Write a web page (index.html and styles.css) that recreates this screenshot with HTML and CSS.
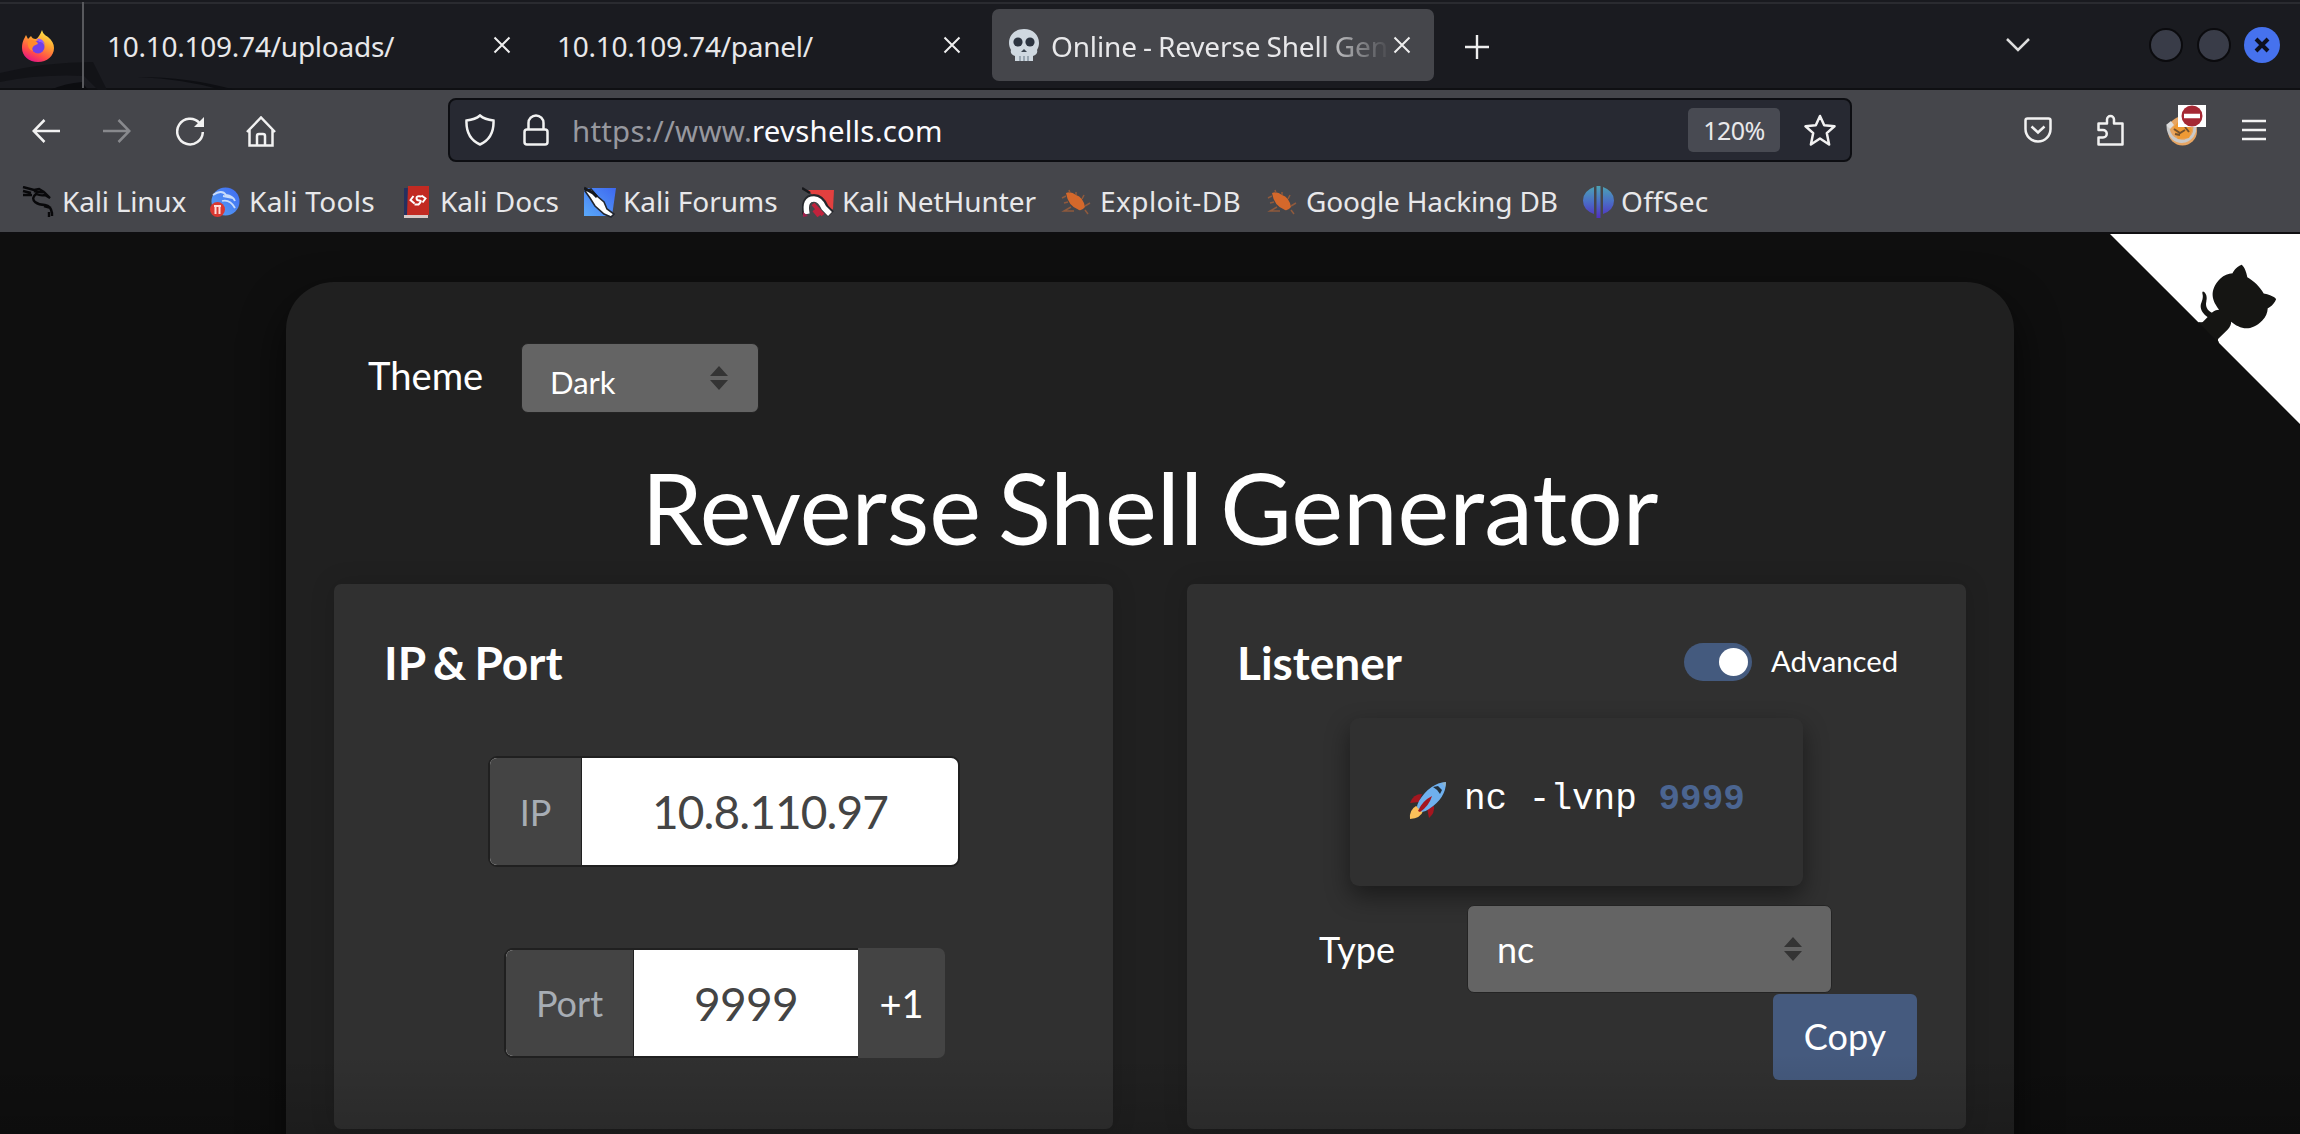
FILE: index.html
```html
<!DOCTYPE html>
<html lang="en">
<head>
<meta charset="utf-8">
<title>Online - Reverse Shell Generator</title>
<link rel="stylesheet" href="styles.css">
</head>
<body>
<div class="window">
  <header class="tabstrip">
    <svg class="wallpaper" width="260" height="90" viewBox="0 0 260 90"><path d="M0 73Q45 62 93 62L107 90H98L84 76Q40 74 0 82Z" fill="#121317"/><path d="M50 90Q66 83 82 82L88 90Z" fill="#0c0d10"/><path d="M137 77Q190 77 235 90H222Q185 79 137 77Z" fill="#0e0f13"/></svg>
    <div class="firefox">
      <svg width="32" height="32" viewBox="0 0 32 32"><defs><linearGradient id="fx" x1=".8" y1="0" x2=".3" y2="1"><stop offset="0" stop-color="#fff44f"/><stop offset=".4" stop-color="#ffa030"/><stop offset=".75" stop-color="#ff4a4a"/><stop offset="1" stop-color="#e31587"/></linearGradient></defs><path d="M20 0c1 4 3 5 6 7 4 3 6 7 6 11 0 8-7 14-16 14S0 26 0 18C0 12 2 9 4 5l2 4 3-3c1 2 2 3 5 3 2-1 4-4 6-9z" fill="url(#fx)"/><circle cx="16" cy="17" r="6.500" fill="#7040e8"/><path d="M6 11c3-2 7-1 9 1l1 2c-2 1-4 1-5 3-1 1-1 3 0 4-4-1-6-5-5-10z" fill="#ff8a2a"/><path d="M15 9c4-1 7 2 8 6-2-3-4-3-6-3z" fill="#9059ff"/></svg>
    </div>
    <div class="tab"><span class="label">10.10.109.74/uploads/</span><svg class="close" width="18" height="18" viewBox="0 0 18 18"><path d="M1.500 1.500l15 15m0-15l-15 15"/></svg></div>
    <div class="tab"><span class="label">10.10.109.74/panel/</span><svg class="close" width="18" height="18" viewBox="0 0 18 18"><path d="M1.500 1.500l15 15m0-15l-15 15"/></svg></div>
    <div class="tab active">
      <svg width="30" height="32" viewBox="0 0 30 32"><path d="M15 0C6 0 0 6 0 14c0 3 1 5 2 7-1 3 1 5 4 6v5h18v-5c3-1 5-3 4-6 1-2 2-4 2-7C30 6 24 0 15 0z" fill="#cfd8e0"/><circle cx="9" cy="13" r="4.600" fill="#2c3440"/><circle cx="21" cy="13" r="4.600" fill="#2c3440"/><path d="M12 23l3-3 3 3z" fill="#3b444f"/><path d="M11 27v5m4-5v5m4-5v5" stroke="#8996a3" stroke-width="1.500"/></svg>
      <span class="label fade">Online - Reverse Shell Gen</span><svg class="close" width="18" height="18" viewBox="0 0 18 18"><path d="M1.500 1.500l15 15m0-15l-15 15"/></svg></div>
    <svg class="plus" width="24" height="24" viewBox="0 0 24 24"><path d="M12 0v24M0 12h24"/></svg>
    <div class="controls">
      <svg class="chev" width="26" height="16" viewBox="0 0 26 16"><path d="M2 2l11 11L24 2"/></svg>
      <i class="dot"></i><i class="dot"></i>
      <i class="dot quit"><svg width="16" height="16" viewBox="0 0 16 16"><path d="M2 2l12 12m0-12L2 14" stroke="#0d1020" stroke-width="4"/></svg></i>
    </div>
  </header>

  <nav class="toolbar">
    <div class="navset">
      <svg class="ic" width="28" height="24" viewBox="0 0 28 24"><path d="M28 12H2M12.500 1L1.700 12l10.800 11"/></svg>
      <svg class="ic off" width="28" height="24" viewBox="0 0 28 24"><path d="M0 12h26M15.500 1l10.800 11-10.800 11"/></svg>
      <svg class="ic reload" width="28" height="30" viewBox="0 0 28 30"><path d="M23.500 7A12.800 12.800 0 1 0 26.800 16"/><path d="M28 1v10H18z" fill="#f2f2f2" stroke="none"/></svg>
      <svg class="ic" width="30" height="31" viewBox="0 0 30 31"><path d="M1 16L15 1.500 29 16M3.500 14v15.500h23V14M11 29.500V20q0-2 2-2h4q2 0 2 2v9.500"/></svg>
    </div>
    <div class="urlbar">
      <svg class="ic" width="30" height="32" viewBox="0 0 30 32"><path d="M15 1.500C11 5 6 6 1.500 6.500 1 18 5 26 15 30.500 25 26 29 18 28.500 6.500 24 6 19 5 15 1.500z"/></svg>
      <svg class="ic lock" width="26" height="32" viewBox="0 0 26 32"><rect x="1.500" y="15.500" width="23" height="15" rx="2.500"/><path d="M5.500 15V9a7.500 7.500 0 0 1 15 0v6"/></svg>
      <span class="url">https://www.<b>revshells.com</b></span>
      <span class="zoom">120%</span>
      <svg class="ic star" width="32" height="32" viewBox="0 0 32 32"><path d="M16 2l4.200 9.300 10.300 1-7.700 6.800 2.300 11.400L16 24.500l-9.100 6 2.300-11.400L1.500 12.300l10.300-1z" stroke-linejoin="round"/></svg>
    </div>
    <div class="tools">
      <svg class="ic" width="28" height="26" viewBox="0 0 28 26"><path d="M3.500 1.500h21q2 0 2 2V12a12.500 12.500 0 0 1-25 0V3.500q0-2 2-2z"/><path d="M7.500 9.500l6.500 6 6.500-6"/></svg>
      <svg class="ic puzzle" width="27" height="32" viewBox="0 0 27 32"><path d="M1.500 16V9.500H10V5.500a3.500 3.500 0 0 1 7 0v4h8.500v21h-24v-7H6a3.700 3.700 0 0 0 0-7.500z" stroke-linejoin="round"/></svg>
      <span class="cookie">
        <svg width="32" height="32" viewBox="0 0 32 32"><circle cx="16.500" cy="17" r="14.500" fill="#e6a563"/><path d="M2 12c0 10 8 17 17 15 7-2 10-8 10-14" fill="none" stroke="#c9c9c9" stroke-width="3"/><path d="M7 14l5-6h10l4 8-3 8-11 1z" fill="#ef9a35"/><path d="M8 15l6 4 5-3m-10 4l5 1m5-8l4 5" stroke="#74522f" stroke-width="2" fill="none"/><path d="M0 11l5-4 3 4-4 4z" fill="#ddd"/></svg>
        <i class="stop"><svg width="22" height="22" viewBox="0 0 22 22"><circle cx="11" cy="11" r="10.500" fill="#a52834"/><path d="M3 11h16" stroke="#fff" stroke-width="4.500"/></svg></i>
      </span>
      <svg class="ic menu" width="24" height="22" viewBox="0 0 24 22"><path d="M0 2h24M0 11h24M0 20h24"/></svg>
    </div>
  </nav>

  <nav class="bookmarks">
    <a class="bm b1"><svg width="32" height="32" viewBox="0 0 32 32"><path d="M1 1l11 3 5-1 5 3M1 5l8 2m-8 2l9 0M12 5q6 2 10 1l6 6-5-3q-4 1-9-1-5 4-1 8 4 3 10 3 6 1 7 8l0 3M22 20l7 2m-2 4v5" fill="none" stroke="#08080a" stroke-width="2.400"/></svg>Kali Linux</a>
    <a class="bm b2"><svg width="30" height="32" viewBox="0 0 30 32"><defs><linearGradient id="kt" x1="0" y1="1" x2="1" y2="0"><stop offset="0" stop-color="#58a6f5"/><stop offset="1" stop-color="#3f69f2"/></linearGradient></defs><circle cx="15.500" cy="15.500" r="14" fill="url(#kt)"/><path d="M3 9q9-6 13 0 7 1 9 6M12 15q8-2 13 7M13 10l10 2" fill="none" stroke="#c8dcfb" stroke-width="1.800"/><circle cx="7.500" cy="23.500" r="7.500" fill="#d93831"/><path d="M4 20h7M5.500 20v8M9.500 20v8" stroke="#ffdcd8" stroke-width="2"/></svg>Kali Tools</a>
    <a class="bm b3"><svg width="25" height="32" viewBox="0 0 25 32"><path d="M0 2h4v30H0z" fill="#24305f"/><path d="M4 0h21v29H3z" fill="#c22a22"/><path d="M0 29h24v3H0z" fill="#d8c9c6"/><path d="M9.500 10l-3 4 4 3.500m7-8l4 3-3 4M17.500 10.500q-5-1-5 1.500t3 2.500-1 4h-4" fill="none" stroke="#fff" stroke-width="2"/></svg>Kali Docs</a>
    <a class="bm b4"><svg width="32" height="32" viewBox="0 0 32 32"><defs><linearGradient id="kf" x1="0" y1="1" x2="1" y2="0"><stop offset="0" stop-color="#5aa9fa"/><stop offset="1" stop-color="#3e68f0"/></linearGradient></defs><path d="M0 2h32l-4 28H0z" fill="url(#kf)"/><path d="M1 5l6-2 6 7 7 6 3 7 7 5-3 3-7-3-9-8-5-8z" fill="#fff" stroke="#22262f" stroke-width="1.600"/><path d="M0 2l9 5 4 4" fill="none" stroke="#15171b" stroke-width="3"/></svg>Kali Forums</a>
    <a class="bm b5"><svg width="32" height="32" viewBox="0 0 32 32"><path d="M6 4h26l-1 19-5 4z" fill="#e2403f"/><path d="M4 28q-2-16 8-16 7 0 11 10l6 6" fill="none" stroke="#25272c" stroke-width="8"/><path d="M5 28q-3-15 7-15 6 0 10 9l6 6" fill="none" stroke="#fff" stroke-width="5.500"/><path d="M11 18l10 11m-9-5l5 6" stroke="#c0223c" stroke-width="4"/><path d="M0 2l8 5" stroke="#17181b" stroke-width="2.500"/><path d="M1 26l5 4-5 1z" fill="#9c1f4a"/></svg>Kali NetHunter</a>
    <a class="bm b6"><svg class="bug" width="30" height="26" viewBox="0 0 30 26"><path d="M5 4q5-2 10 2 7 2 9 12-3 4-6 3Q7 17 5 4z" fill="#d4682b"/><path d="M9 4L8 1m7 5V3m6 7l2-4m1 11l5-3m-5 7l3 4M5 7l-4 2m6 4l-4 1m7 4l-7 4 10 0" stroke="#8f5a3d" stroke-width="1.500" fill="none"/></svg>Exploit-DB</a>
    <a class="bm b7"><svg class="bug" width="30" height="26" viewBox="0 0 30 26"><path d="M5 4q5-2 10 2 7 2 9 12-3 4-6 3Q7 17 5 4z" fill="#d4682b"/><path d="M9 4L8 1m7 5V3m6 7l2-4m1 11l5-3m-5 7l3 4M5 7l-4 2m6 4l-4 1m7 4l-7 4 10 0" stroke="#8f5a3d" stroke-width="1.500" fill="none"/></svg>Google Hacking DB</a>
    <a class="bm b8"><svg width="31" height="32" viewBox="0 0 31 32"><defs><linearGradient id="os" x1="0" y1="0" x2="0" y2="1"><stop offset="0" stop-color="#4ca3b5"/><stop offset=".5" stop-color="#4a6dc6"/><stop offset="1" stop-color="#5130c0"/></linearGradient></defs><path d="M11 1v27Q0 24 0 14.500 0 5 11 1zM20 1v27q11-4 11-13.500Q31 5 20 1zM13.500 0h4v32h-4z" fill="url(#os)"/></svg>OffSec</a>
  </nav>

  <main class="page">
    <svg class="corner" width="192" height="192" viewBox="0 0 250 250"><path d="M0,0 L115,115 L130,115 L142,142 L250,250 L250,0 Z" fill="#fff"/><path d="M128.3,109.0 C113.8,99.7 119.0,89.6 119.0,89.6 C122.0,82.7 120.5,78.6 120.5,78.6 C119.2,72.0 123.4,76.3 123.4,76.3 C127.3,80.9 125.5,87.3 125.5,87.3 C122.9,97.6 130.6,101.9 134.4,103.2" fill="#151513"/><path d="M115.0,115.0 C114.9,115.1 118.7,116.5 119.8,115.4 L133.7,101.6 C136.9,99.2 139.9,98.4 142.2,98.6 C133.8,88.0 127.5,74.4 143.8,58.0 C148.5,53.4 154.0,51.2 159.7,51.0 C160.3,49.4 163.2,43.6 171.4,40.1 C171.4,40.1 176.1,42.5 178.8,56.2 C183.1,58.6 187.2,61.8 190.9,65.4 C194.5,69.0 197.7,73.2 200.1,77.6 C213.8,80.2 216.3,84.9 216.3,84.9 C212.7,93.1 206.9,96.0 205.4,96.6 C205.1,102.4 203.0,107.8 198.3,112.5 C181.9,128.9 168.3,122.5 157.7,114.1 C157.9,116.9 156.7,120.9 152.7,124.9 L141.0,136.5 C139.8,137.7 141.6,141.9 141.8,141.8 Z" fill="#151513"/></svg>
    <div class="container">
      <div class="theme"><label>Theme</label>
        <div class="select small"><span>Dark</span><svg width="18" height="24" viewBox="0 0 18 24"><path d="M9 0l9 10H0zM9 24l9-10H0z" fill="#343434"/></svg></div>
      </div>
      <h1>Reverse Shell Generator</h1>
      <div class="cards">
        <section class="card">
          <h2>IP &amp; Port</h2>
          <div class="group ip"><span class="prefix">IP</span><span class="value">10.8.110.97</span></div>
          <div class="group port"><span class="prefix">Port</span><span class="value">9999</span><span class="inc">+1</span></div>
        </section>
        <section class="card">
          <div class="head"><h2>Listener</h2><i class="switch"></i><span class="adv">Advanced</span></div>
          <div class="command">
            <svg width="38" height="38" viewBox="0 0 38 38"><path d="M13 13Q4 13 1 22l9-1z" fill="#a4161f"/><path d="M25 25q1 7-5 12l-2-10z" fill="#a4161f"/><path d="M7 25l7 5q-2 7-13 8Q0 29 7 25z" fill="#fbc05a"/><path d="M37 1Q21 2 10 20q-2 4-2 6l5 5q3 0 7-3Q37 17 37 1z" fill="#6fb0ee"/><path d="M24 6q4 2 7 7l2-4-4-4z" fill="#23303c"/><path d="M33 2l4-1-1 5z" fill="#8fb3cc"/><path d="M9 30Q13 20 23 15q-3 10-12 16z" fill="#a4161f"/></svg><code>nc -lvnp <b>9999</b></code>
          </div>
          <div class="type"><label>Type</label>
            <div class="select"><span>nc</span><svg width="18" height="24" viewBox="0 0 18 24"><path d="M9 0l9 10H0zM9 24l9-10H0z" fill="#343434"/></svg></div>
          </div>
          <div class="actions"><span class="copy">Copy</span></div>
        </section>
      </div>
    </div>
    <div class="shade"></div>
  </main>
</div>
</body>
</html>
```
FILE: styles.css
```css
* { box-sizing: border-box; }
body { margin: 0; background: #0f0f0f; }
svg { display: block; flex: none; }
.window { width: 2300px; height: 1134px; overflow: hidden; display: flex; flex-direction: column; font-family: "Noto Sans", sans-serif; color: #e8e8ea; }

.tabstrip { position: relative; height: 90px; flex: none; display: flex; align-items: center; background: #1a1b20; border-top: 2px solid #191a1f; border-bottom: 2px solid #0f1013; box-shadow: inset 0 2px #2a2b30; font-size: 28px; }
.wallpaper { position: absolute; left: 0; top: -2px; }
.firefox { position: relative; width: 84px; height: 86px; padding: 28px 0 0 22px; border-right: 2px solid #58595d; }
.tab { position: relative; display: flex; align-items: center; width: 450px; height: 72px; padding-left: 23px; }
.tab .label { width: 384px; white-space: nowrap; line-height: 44px; letter-spacing: -.25px; padding-top: 2px; }
.tab .close { margin-left: 2px; }
.close, .plus, .chev { fill: none; stroke: #eee; stroke-width: 2; }
.tab.active { width: 442px; margin-left: 8px; padding-left: 17px; border-radius: 7px; background: #45464b; }
.tab.active .label { width: 340px; margin-left: 12px; word-spacing: -1px; letter-spacing: -.15px; }
.tab.active .close { margin-left: 2px; }
.fade { -webkit-mask-image: linear-gradient(90deg, #000 265px, transparent 340px); mask-image: linear-gradient(90deg, #000 265px, transparent 340px); }
.plus { margin: 3px 0 0 31px; stroke-width: 2.4; }
.controls { margin-left: auto; display: flex; align-items: center; padding-right: 20px; }
.chev { margin-right: 118px; stroke: #ddd; stroke-width: 2.5; }
.dot { width: 34px; height: 34px; margin-right: 14px; border-radius: 50%; background: #393c48; border: 2px solid #0b0b0e; }
.dot.quit { width: 36px; height: 36px; margin: 0 0 0 -1px; display: flex; align-items: center; justify-content: center; background: #4672ee; border: 0; }

.toolbar { height: 82px; flex: none; display: flex; align-items: center; background: #45464b; }
.ic { fill: none; stroke: #f2f2f2; stroke-width: 2.5; }
.off { stroke: #88898d; }
.navset { display: flex; align-items: center; width: 448px; padding-left: 32px; gap: 43px; }
.reload { margin: 0 -1px 0 2px; }
.urlbar { display: flex; align-items: center; width: 1404px; height: 64px; margin-top: -2px; padding: 0 14px 0 15px; border: 2px solid #0d0e12; border-radius: 8px; background: #272932; }
.lock { margin-left: 28px; }
.url { margin: 1px 0 0 23px; font-size: 29.4px; letter-spacing: .23px; color: #97989f; }
.url b { font-weight: 400; color: #fbfbfe; }
.zoom { margin-left: auto; width: 92px; height: 44px; border-radius: 5px; background: #484a52; font-size: 25px; line-height: 44px; text-align: center; letter-spacing: -.5px; }
.star { margin-left: 24px; }
.tools { display: flex; align-items: center; padding-left: 172px; margin-top: -2px; }
.puzzle { margin-left: 45px; }
.cookie { position: relative; margin-left: 42px; }
.stop { position: absolute; left: 12px; top: -9px; width: 28px; height: 22px; display: flex; justify-content: center; background: #fff; }
.menu { margin-left: 44px; }

.bookmarks { height: 62px; flex: none; display: flex; align-items: center; padding: 0 0 2px 22px; background: #45464b; border-bottom: 2px solid #0f0f11; font-size: 28px; }
.bm { display: flex; align-items: center; height: 60px; white-space: nowrap; letter-spacing: 0; line-height: 58px; }
.bm svg { margin: 2px 10px 0 0; }
.b1 { width: 188px; letter-spacing: -.2px; }
.b1 svg { margin-right: 8px; }
.b2 { width: 194px; letter-spacing: .3px; }
.b2 svg { margin-right: 9px; }
.b3 { width: 180px; }
.b3 svg { margin-right: 11px; }
.b4 { width: 218px; }
.b4 svg { margin-right: 7px; }
.b5 { width: 259px; letter-spacing: -.05px; }
.b5 svg { margin-right: 8px; }
.b6 { width: 206px; letter-spacing: .45px; }
.b7 { width: 316px; letter-spacing: -.15px; }
.bm .bug { margin-right: 9px; }
.b8 { letter-spacing: .3px; }
.b8 svg { margin-right: 7px; }

.page { position: relative; flex: 1; display: flex; justify-content: center; padding-top: 48px; overflow: hidden; background: #0f0f0f; font-family: Lato, sans-serif; color: #fff; }
.corner { position: absolute; right: -2px; top: 0; }
.container { width: 1728px; height: 1000px; padding: 62px 48px 0 48px; border-radius: 48px; background: #202020; box-shadow: 0 20px 44px rgba(0,0,0,.65); }
.theme { display: flex; align-items: center; height: 68px; padding-left: 34px; font-size: 38.2px; }
.theme label { width: 153px; margin-top: -6px; }
.select { display: flex; align-items: center; justify-content: space-between; width: 365px; height: 88px; padding: 0 29px; border: 1px solid #242424; border-radius: 7px; background: #646464; font-size: 36px; }
.select svg { margin-top: -1px; }
.select.small { width: 238px; height: 70px; font-size: 31px; padding: 0 30px 0 28px; }
.select.small span { padding-top: 8px; }
h1 { margin: 38px 0 0; height: 114px; line-height: 114px; font-size: 98px; font-weight: 400; text-align: center; word-spacing: -8px; }
.cards { display: flex; justify-content: space-between; margin-top: 20px; }
.card { width: 779px; height: 545px; border-radius: 7px; background: #303030; box-shadow: 0 0 24px rgba(0,0,0,.15); overflow: hidden; }
h2 { margin: 51px 0 0 50px; height: 56px; line-height: 56px; font-size: 46px; font-weight: 700; word-spacing: -3px; }
.group { display: flex; height: 111px; border: 2px solid #202020; border-radius: 9px; background: #fff; }
.prefix, .value, .inc { display: flex; align-items: center; justify-content: center; }
.prefix { background: #444; color: #a7adb4; font-size: 36px; border-right: 1px solid #202020; border-radius: 7px 0 0 7px; }
.value { flex: 1; color: #444; font-size: 46px; }
.ip { width: 472px; margin: 65px 0 0 154px; }
.ip .prefix { width: 92px; }
.ip .value { letter-spacing: -.9px; }
.port { width: 440px; height: 110px; margin: 81px 0 0 170px; }
.port .prefix { width: 128px; }
.port .value { letter-spacing: -.7px; }
.port .inc { width: 87px; margin: -2px -3px -2px 0; background: #444; border-radius: 0 7px 7px 0; font-size: 38px; }
.head { display: flex; align-items: center; height: 106px; }
.head h2 { flex: 1; }
.switch { width: 68px; height: 38px; margin-top: 49px; padding: 5px 4px; border-radius: 19px; background: #445a7e; display: flex; justify-content: flex-end; }
.switch::after { content: ""; width: 29px; height: 28px; border-radius: 50%; background: #fff; }
.adv { width: 214px; padding-left: 19px; margin-top: 47px; font-size: 29.3px; }
.command { display: flex; align-items: center; width: 453px; height: 168px; margin: 28px 0 0 163px; padding: 0 0 6px 59px; border-radius: 9px; background: #303030; box-shadow: 0 10px 24px rgba(0,0,0,.45); }
.command svg { margin-top: 2px; }
.command code { margin: 2px 0 0 17px; font: 36px/44px "Liberation Mono", monospace; white-space: pre; }
.command b { color: #4b6591; }
.type { display: flex; align-items: center; margin: 19px 0 0 132px; font-size: 36px; }
.type label { width: 148px; }
.actions { display: flex; justify-content: flex-end; padding: 1px 49px 0 0; }
.copy { width: 144px; height: 86px; line-height: 84px; border-radius: 6px; background: #455a7e; text-align: center; font-size: 36px; }
.shade { position: absolute; left: 0; right: 0; bottom: 0; height: 80px; background: linear-gradient(transparent, rgba(0,0,0,.13)); }
```
